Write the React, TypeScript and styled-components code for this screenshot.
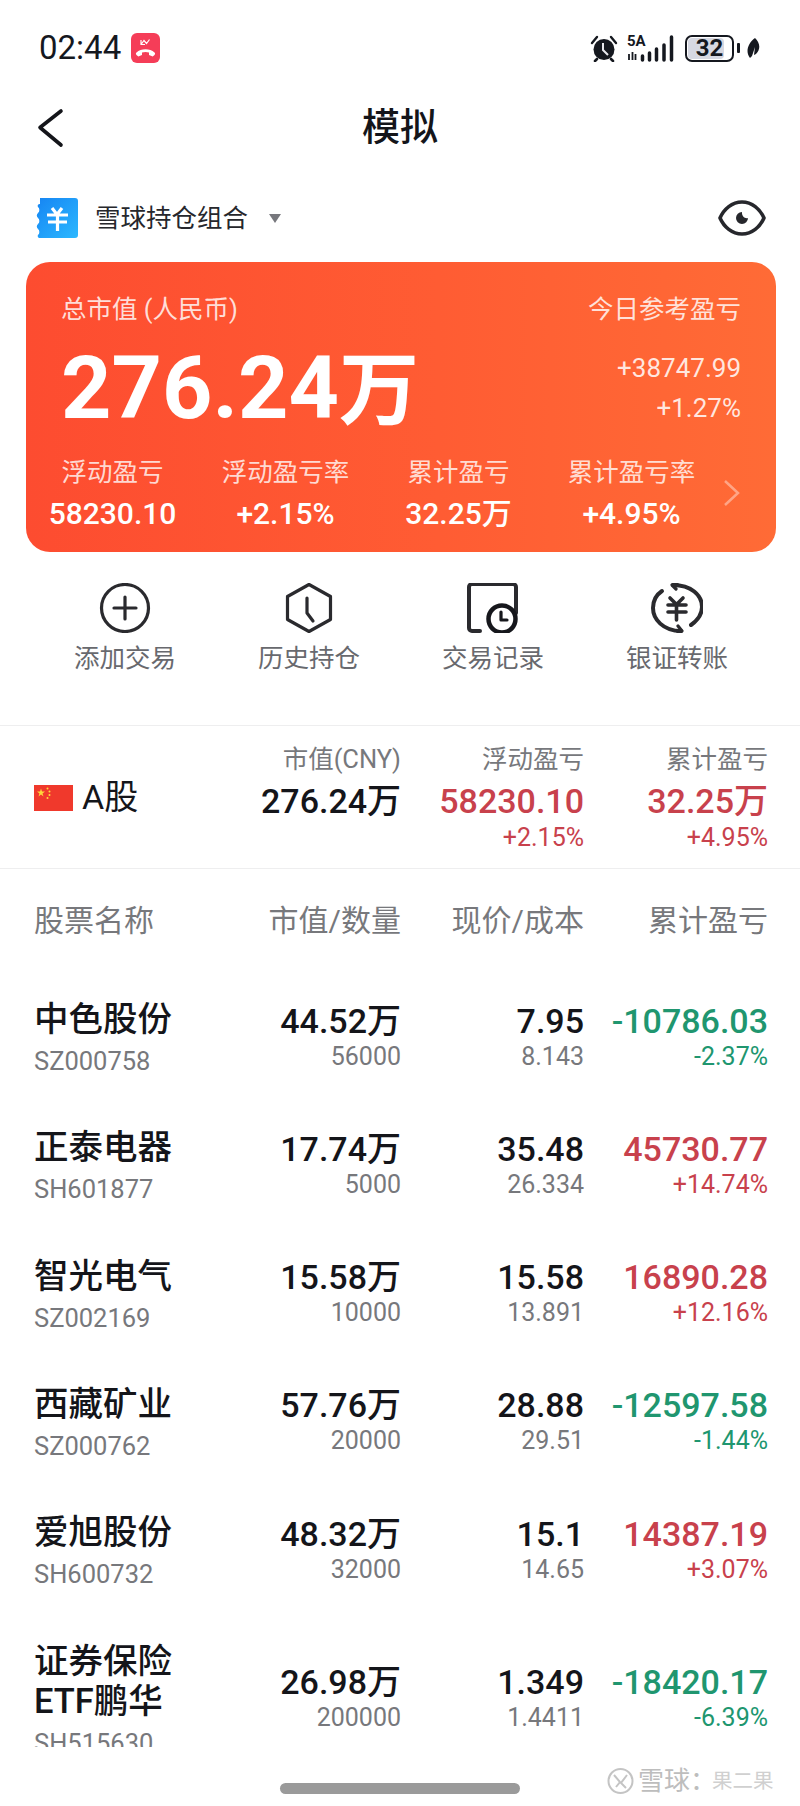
import React from 'react';
import styled, { createGlobalStyle } from 'styled-components';

const GlobalStyle = createGlobalStyle`
  html, body {
    margin: 0;
    padding: 0;
    background: #fff;
  }
  * {
    box-sizing: border-box;
  }
`;

const COLS = '227px 140px 183px 184px';

const Page = styled.div`
  position: relative;
  width: 800px;
  height: 1806px;
  overflow: hidden;
  display: flex;
  flex-direction: column;
  background: #fff;
  color: #16171c;
  font-family: Roboto, 'Noto Sans CJK SC', sans-serif;
`;

const Scroll = styled.div`
  height: 1747px;
  overflow: hidden;
  flex: none;
`;

const StatusBar = styled.div`
  height: 96px;
  padding: 0 40px 0 39px;
  display: flex;
  align-items: center;
  justify-content: space-between;
`;

const StatusGroup = styled.div`
  display: flex;
  align-items: center;
`;

const Clock = styled.span`
  font-size: 33px;
  line-height: 40px;
  color: #15181f;
  margin-right: 10px;
`;

const NetworkBlock = styled.div`
  position: relative;
  width: 48px;
  height: 27px;
  margin-left: 9px;
`;

const NetworkSpeed = styled.span`
  position: absolute;
  left: 0;
  top: 0;
  font-size: 15px;
  line-height: 13px;
  font-weight: 700;
  color: #15181f;
`;

const Battery = styled.div`
  position: relative;
  width: 49px;
  height: 27px;
  margin-left: 10px;
  border: 2px solid #15181f;
  border-radius: 7px;
  padding: 1px;
  display: flex;
`;

const BatteryFill = styled.div`
  width: 36px;
  border-radius: 4px;
  background: #d6d8e2;
`;

const BatteryText = styled.span`
  position: absolute;
  left: 0;
  top: 0;
  width: 45px;
  text-align: center;
  font-size: 24px;
  line-height: 23px;
  font-weight: 700;
  color: #15181f;
`;

const BatteryNub = styled.div`
  width: 3px;
  height: 10px;
  margin-left: 3px;
  border-radius: 1px;
  background: #15181f;
`;

const NavBar = styled.div`
  position: relative;
  height: 62px;
  display: flex;
  align-items: center;
  justify-content: center;
`;

const BackIcon = styled.svg`
  position: absolute;
  left: 36px;
  top: 12px;
`;

const NavTitle = styled.h1`
  margin: 0;
  font-size: 38px;
  line-height: 50px;
  font-weight: 500;
  color: #14151a;
`;

const PortfolioRow = styled.div`
  height: 60px;
  margin: 30px 34px 14px 35px;
  display: flex;
  align-items: center;
`;

const PortfolioName = styled.span`
  margin-left: 17px;
  font-size: 25.5px;
  line-height: 36px;
  color: #26272c;
`;

const Caret = styled.span`
  margin-left: 21px;
  width: 0;
  height: 0;
  border-left: 6.5px solid transparent;
  border-right: 6.5px solid transparent;
  border-top: 9px solid #77787d;
`;

const EyeIcon = styled.svg`
  margin-left: auto;
`;

const SummaryCard = styled.section`
  height: 290px;
  margin: 0 24px 0 26px;
  padding: 32px 35px 0 0;
  border-radius: 24px;
  background: linear-gradient(90deg, #fd4c30 0%, #ff5c33 55%, #ff6b36 100%);
  color: #fff;
`;

const SummaryTop = styled.div`
  display: flex;
  justify-content: space-between;
  padding-left: 35px;
`;

const SummaryLabel = styled.span`
  font-size: 25.5px;
  line-height: 30px;
  color: rgba(255, 255, 255, 0.82);
  white-space: pre;
`;

const SummaryMiddle = styled.div`
  height: 112px;
  padding-left: 35px;
  display: flex;
  justify-content: space-between;
`;

const BigValue = styled.div`
  margin-top: 26px;
  font-size: 88px;
  line-height: 76px;
  font-weight: 700;
  white-space: nowrap;
`;

const BigUnit = styled.span`
  font-size: 80px;
  font-weight: 700;
`;

const TodayStack = styled.div`
  margin-top: 24px;
  text-align: right;
  font-size: 26px;
  line-height: 40px;
  color: rgba(255, 255, 255, 0.85);
`;

const MetricGrid = styled.div`
  display: grid;
  grid-template-columns: repeat(4, 173px) 1fr;
  margin-top: 21px;
`;

const Metric = styled.div`
  text-align: center;
`;

const MetricLabel = styled.div`
  font-size: 25.5px;
  line-height: 30px;
  color: rgba(255, 255, 255, 0.8);
`;

const MetricValue = styled.div`
  margin-top: 12px;
  font-size: 30px;
  line-height: 30px;
  font-weight: 500;
  white-space: nowrap;
`;

const MetricArrow = styled.svg`
  margin: 22px 0 0 5px;
`;

const ActionRow = styled.div`
  height: 173px;
  padding: 31px 33px 0;
  display: grid;
  grid-template-columns: repeat(4, 184px);
  align-items: start;
`;

const Action = styled.div`
  display: flex;
  flex-direction: column;
  align-items: center;
  gap: 7px;
`;

const ActionLabel = styled.span`
  font-size: 25.5px;
  line-height: 36px;
  color: #68696e;
`;

const MarketRow = styled.div`
  height: 144px;
  padding: 16px 32px 0 34px;
  display: grid;
  grid-template-columns: ${COLS};
  align-items: start;
  border-top: 1px solid #eeeeef;
  border-bottom: 1px solid #eeeeef;
`;

const MarketName = styled.div`
  height: 112px;
  display: flex;
  align-items: center;
  gap: 9px;
  font-size: 34px;
  color: #14151a;
`;

const MarketNameText = styled.span`
  margin-bottom: 7px;
`;

const Cell = styled.div`
  text-align: right;
  white-space: nowrap;
`;

const StockCell = styled(Cell)`
  margin-bottom: 6px;
`;

const ColumnLabel = styled.div`
  font-size: 25.5px;
  line-height: 34px;
  color: #77787c;
`;

const MarketValue = styled.div<{ $tone?: 'up' | 'down' }>`
  font-size: 34px;
  line-height: 50px;
  font-weight: 500;
  color: ${(p) => (p.$tone === 'up' ? '#c8414c' : p.$tone === 'down' ? '#20966f' : '#14151a')};
`;

const MarketSub = styled.div<{ $tone?: 'up' | 'down' }>`
  font-size: 25px;
  line-height: 24px;
  color: ${(p) => (p.$tone === 'up' ? '#c8414c' : '#20966f')};
`;

const ListHeader = styled.div`
  height: 106px;
  padding: 34px 32px 0 34px;
  display: grid;
  grid-template-columns: ${COLS};
  align-items: start;
  font-size: 30px;
  line-height: 36px;
  color: #77787c;
`;

const HeaderRight = styled.div`
  text-align: right;
  white-space: nowrap;
`;

const StockRow = styled.div`
  padding: 24.15px 32px 20.15px 34px;
  display: grid;
  grid-template-columns: ${COLS};
  align-items: center;
`;

const StockName = styled.div`
  max-width: 150px;
  font-size: 34.5px;
  line-height: 40px;
  font-weight: 500;
  color: #14151a;
`;

const StockCode = styled.div`
  font-size: 25.5px;
  line-height: 44px;
  color: #77787c;
`;

const MainValue = styled.div<{ $tone?: 'up' | 'down' }>`
  font-size: 34px;
  line-height: 36px;
  font-weight: 500;
  color: ${(p) => (p.$tone === 'up' ? '#c8414c' : p.$tone === 'down' ? '#20966f' : '#14151a')};
`;

const SubValue = styled.div<{ $tone?: 'up' | 'down' }>`
  margin-top: 1px;
  font-size: 25px;
  line-height: 34px;
  color: ${(p) => (p.$tone === 'up' ? '#c8414c' : p.$tone === 'down' ? '#20966f' : '#77787c')};
`;

const Footer = styled.div`
  flex: 1;
  display: flex;
  justify-content: center;
  padding-top: 36px;
`;

const HomeBar = styled.div`
  width: 240px;
  height: 11px;
  border-radius: 6px;
  background: #9a9a9a;
`;

const Watermark = styled.div`
  position: absolute;
  left: 607px;
  top: 1766px;
  display: flex;
  align-items: center;
  gap: 4px;
  font-size: 26px;
  line-height: 30px;
  color: #bdbdbd;
  white-space: nowrap;
  text-shadow: 0 0 1px #fff;
`;

const WatermarkAuthor = styled.span`
  margin-left: -8px;
  font-size: 20.5px;
  color: #d0d0d0;
`;

type Tone = 'up' | 'down';

interface Stock {
  name: string;
  code: string;
  value: string;
  qty: string;
  price: string;
  cost: string;
  pnl: string;
  pct: string;
  tone: Tone;
}

const stocks: Stock[] = [
  { name: '中色股份', code: 'SZ000758', value: '44.52万', qty: '56000', price: '7.95', cost: '8.143', pnl: '-10786.03', pct: '-2.37%', tone: 'down' },
  { name: '正泰电器', code: 'SH601877', value: '17.74万', qty: '5000', price: '35.48', cost: '26.334', pnl: '45730.77', pct: '+14.74%', tone: 'up' },
  { name: '智光电气', code: 'SZ002169', value: '15.58万', qty: '10000', price: '15.58', cost: '13.891', pnl: '16890.28', pct: '+12.16%', tone: 'up' },
  { name: '西藏矿业', code: 'SZ000762', value: '57.76万', qty: '20000', price: '28.88', cost: '29.51', pnl: '-12597.58', pct: '-1.44%', tone: 'down' },
  { name: '爱旭股份', code: 'SH600732', value: '48.32万', qty: '32000', price: '15.1', cost: '14.65', pnl: '14387.19', pct: '+3.07%', tone: 'up' },
  { name: '证券保险ETF鹏华', code: 'SH515630', value: '26.98万', qty: '200000', price: '1.349', cost: '1.4411', pnl: '-18420.17', pct: '-6.39%', tone: 'down' },
];

const metrics = [
  { label: '浮动盈亏', value: '58230.10' },
  { label: '浮动盈亏率', value: '+2.15%' },
  { label: '累计盈亏', value: '32.25万' },
  { label: '累计盈亏率', value: '+4.95%' },
];

const CallIcon = () => (
  <svg width="29" height="30" viewBox="0 0 29 30">
    <rect width="29" height="30" rx="6" fill="#f53d58" />
    <path d="M10 7v4.500h4M10 11.500l3-4 2.500 3 3-4" fill="none" stroke="#fff" strokeWidth="1.2" />
    <path
      d="M5.500 19.500c4.500-4.200 13.500-4.200 18 0 .8.800.8 1.600 0 2.500l-1.800 1.500-3.700-1.500v-2.400c-2.300-.7-4.700-.7-7 0V22l-3.700 1.500L5.500 22c-.8-.9-.8-1.700 0-2.500z"
      fill="#fff"
    />
  </svg>
);

const AlarmIcon = () => (
  <svg width="28" height="27" viewBox="0 0 28 27">
    <path d="M2 8l5-6M26 8l-5-6" stroke="#15181f" strokeWidth="2.400" strokeLinecap="round" />
    <path d="M7 24l-2 2M21 24l2 2" stroke="#15181f" strokeWidth="2.600" strokeLinecap="round" />
    <circle cx="14" cy="14.500" r="10.500" fill="#15181f" />
    <path d="M13 8v7l5 5" fill="none" stroke="#e8e9ee" strokeWidth="2" />
  </svg>
);

const SignalIcon = () => (
  <svg width="48" height="27" viewBox="0 0 48 27" style={{ position: 'absolute', left: 0, top: 0 }}>
    <path d="M2 19v6M5.500 17v8M8.500 25v-6" stroke="#15181f" strokeWidth="1.800" />
    <path d="M15.500 25v-4M22.500 25v-7M29.500 25v-11M37 25v-15M44.500 25V2" stroke="#15181f" strokeWidth="3.500" strokeLinecap="round" />
  </svg>
);

const LeafIcon = () => (
  <svg width="14" height="20" viewBox="0 0 14 20" style={{ marginLeft: 6 }}>
    <path d="M9 0c5 5 6 11 1 16l-2 1 1-8-3 9-2 2C-1 14 2 5 9 0z" fill="#15181f" />
  </svg>
);

const TicketIcon = () => (
  <svg width="43" height="40" viewBox="0 0 43 40">
    <defs>
      <linearGradient id="ticket" x1="0" y1="0" x2="1" y2="1">
        <stop offset="0" stopColor="#1685f3" />
        <stop offset="1" stopColor="#2cb8ff" />
      </linearGradient>
    </defs>
    <path
      d="M5 0h35a3 3 0 0 1 3 3v34a3 3 0 0 1-3 3H5a2 2 0 0 1-2-3 4 4 0 0 0 0-6 3.600 3.600 0 0 1 0-5 4 4 0 0 0 0-6 3.600 3.600 0 0 1 0-5 4 4 0 0 0 0-6 2 2 0 0 1 2-3z"
      fill="url(#ticket)"
    />
    <path d="M17 10l5 6.500 5-6.500M12 17h21M13 24h19M22.500 16.500V33" fill="none" stroke="#fff" strokeWidth="3.200" />
  </svg>
);

const Eye = () => (
  <EyeIcon width="48" height="36" viewBox="0 0 48 36">
    <path
      d="M2 18C6 9 14 2 24 2s18 7 22 16c-4 9-12 16-22 16S6 27 2 18z"
      fill="none"
      stroke="#26272c"
      strokeWidth="3.600"
      strokeLinejoin="round"
    />
    <path d="M24 12a6 6 0 1 0 6 6c-3 1-6.500-2-6-6z" fill="#26272c" />
  </EyeIcon>
);

const ActionIcon = ({ kind }: { kind: number }) => (
  <svg width="52" height="50" viewBox="0 0 52 50" fill="none" stroke="#2a2a2e" strokeWidth="3.200" strokeLinecap="round" strokeLinejoin="round">
    {kind === 0 && (
      <>
        <circle cx="26" cy="25" r="23.500" />
        <path d="M26 14v22M15 25h22" />
      </>
    )}
    {kind === 1 && (
      <>
        <path d="M26 1.500L47.500 13.500v23L26 48.500 4.500 36.500v-23z" />
        <path d="M24 15v15l6 8" />
      </>
    )}
    {kind === 2 && (
      <>
        <path d="M13 48H5a3 3 0 0 1-3-3V4a3 3 0 0 1 3-3h41a3 3 0 0 1 3 3v26" strokeWidth="4" />
        <circle cx="35" cy="36" r="13.500" stroke="#16171c" strokeWidth="4.500" />
        <path d="M34 29v8h6" stroke="#16171c" />
      </>
    )}
    {kind === 3 && (
      <>
        <path d="M40 42c7-5 11-11 11-18C51 12 40 2 22 2" strokeWidth="4" />
        <path d="M26 0l-5 2 4 4" strokeWidth="3.200" />
        <path d="M11 8C5 12 2 18 2 25c0 11 10 23 28 23" strokeWidth="4" />
        <path d="M27 43l4 5-4 2" strokeWidth="3.200" />
        <path d="M19 15l6.500 6.500L32 15M17 22h18M17 29h18M25.500 21.500V37" strokeWidth="3.600" />
      </>
    )}
  </svg>
);

const FlagIcon = () => (
  <svg width="39" height="26" viewBox="0 0 39 26">
    <rect width="39" height="26" fill="#f0392c" />
    <path d="M7 3.500l1 3h3l-2.500 2 1 3L7 9.500 4.500 11.500l1-3L3 6.500h3z" fill="#ffd83b" />
    <circle cx="13.500" cy="3.500" r="1" fill="#ffd83b" />
    <circle cx="15.500" cy="6.500" r="1" fill="#ffd83b" />
    <circle cx="15.500" cy="10" r="1" fill="#ffd83b" />
    <circle cx="13.500" cy="13" r="1" fill="#ffd83b" />
  </svg>
);

const App: React.FC = () => (
  <Page>
    <GlobalStyle />
    <Scroll>
      <StatusBar>
        <StatusGroup>
          <Clock>02:44</Clock>
          <CallIcon />
        </StatusGroup>
        <StatusGroup>
          <AlarmIcon />
          <NetworkBlock>
            <NetworkSpeed>5A</NetworkSpeed>
            <SignalIcon />
          </NetworkBlock>
          <Battery>
            <BatteryFill />
            <BatteryText>32</BatteryText>
          </Battery>
          <BatteryNub />
          <LeafIcon />
        </StatusGroup>
      </StatusBar>

      <NavBar>
        <BackIcon width="30" height="40" viewBox="0 0 30 40">
          <path d="M25 3L4 19.500 25 37" fill="none" stroke="#14151a" strokeWidth="3.600" strokeLinecap="round" strokeLinejoin="round" />
        </BackIcon>
        <NavTitle>模拟</NavTitle>
      </NavBar>

      <PortfolioRow>
        <TicketIcon />
        <PortfolioName>雪球持仓组合</PortfolioName>
        <Caret />
        <Eye />
      </PortfolioRow>

      <SummaryCard>
        <SummaryTop>
          <SummaryLabel>总市值 (人民币)</SummaryLabel>
          <SummaryLabel>今日参考盈亏</SummaryLabel>
        </SummaryTop>
        <SummaryMiddle>
          <BigValue>
            276.24<BigUnit>万</BigUnit>
          </BigValue>
          <TodayStack>
            <div>+38747.99</div>
            <div>+1.27%</div>
          </TodayStack>
        </SummaryMiddle>
        <MetricGrid>
          {metrics.map((m) => (
            <Metric key={m.label}>
              <MetricLabel>{m.label}</MetricLabel>
              <MetricValue>{m.value}</MetricValue>
            </Metric>
          ))}
          <MetricArrow width="18" height="28" viewBox="0 0 18 28">
            <path d="M2 2l13 12L2 26" fill="none" stroke="rgba(255,255,255,0.4)" strokeWidth="2.500" />
          </MetricArrow>
        </MetricGrid>
      </SummaryCard>

      <ActionRow>
        {['添加交易', '历史持仓', '交易记录', '银证转账'].map((label, i) => (
          <Action key={label}>
            <ActionIcon kind={i} />
            <ActionLabel>{label}</ActionLabel>
          </Action>
        ))}
      </ActionRow>

      <MarketRow>
        <MarketName>
          <FlagIcon />
          <MarketNameText>A股</MarketNameText>
        </MarketName>
        <Cell>
          <ColumnLabel>市值(CNY)</ColumnLabel>
          <MarketValue>276.24万</MarketValue>
        </Cell>
        <Cell>
          <ColumnLabel>浮动盈亏</ColumnLabel>
          <MarketValue $tone="up">58230.10</MarketValue>
          <MarketSub $tone="up">+2.15%</MarketSub>
        </Cell>
        <Cell>
          <ColumnLabel>累计盈亏</ColumnLabel>
          <MarketValue $tone="up">32.25万</MarketValue>
          <MarketSub $tone="up">+4.95%</MarketSub>
        </Cell>
      </MarketRow>

      <ListHeader>
        <div>股票名称</div>
        <HeaderRight>市值/数量</HeaderRight>
        <HeaderRight>现价/成本</HeaderRight>
        <HeaderRight>累计盈亏</HeaderRight>
      </ListHeader>

      {stocks.map((s) => (
        <StockRow key={s.code}>
          <div>
            <StockName>{s.name}</StockName>
            <StockCode>{s.code}</StockCode>
          </div>
          <StockCell>
            <MainValue>{s.value}</MainValue>
            <SubValue>{s.qty}</SubValue>
          </StockCell>
          <StockCell>
            <MainValue>{s.price}</MainValue>
            <SubValue>{s.cost}</SubValue>
          </StockCell>
          <StockCell>
            <MainValue $tone={s.tone}>{s.pnl}</MainValue>
            <SubValue $tone={s.tone}>{s.pct}</SubValue>
          </StockCell>
        </StockRow>
      ))}
    </Scroll>

    <Footer>
      <HomeBar />
    </Footer>

    <Watermark>
      <svg width="27" height="28" viewBox="0 0 27 28" fill="none" stroke="#c4c4c4" strokeWidth="2">
        <circle cx="13.500" cy="14" r="12" />
        <path d="M7 8l6 7-4 5M20 8l-6 8 5 5" />
      </svg>
      <span>雪球：</span>
      <WatermarkAuthor>果二果</WatermarkAuthor>
    </Watermark>
  </Page>
);

export default App;
